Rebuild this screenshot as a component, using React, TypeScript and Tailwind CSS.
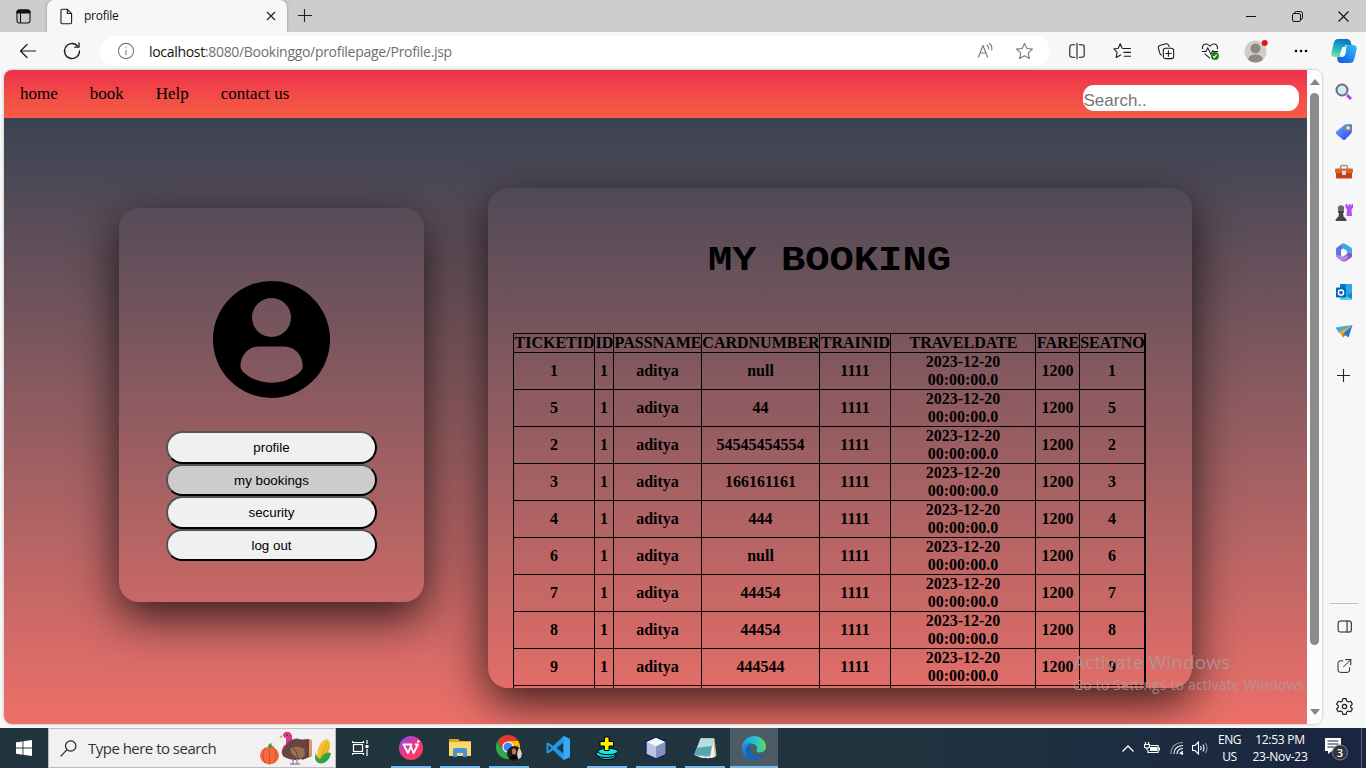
import React from "react";

type Kids = { children?: React.ReactNode };

function Line({ size = 20, w = 1.2, color = "#1b1b1b", children }: Kids & { size?: number; w?: number; color?: string }) {
  return (
    <svg width={size} height={size} viewBox="0 0 20 20" fill="none" stroke={color} strokeWidth={w} strokeLinecap="round" strokeLinejoin="round">
      {children}
    </svg>
  );
}

const star = "M10 1.500l2.500 5.300 5.900.7-4.400 4 1.200 5.900L10 14.500l-5.200 2.900 1.200-5.900-4.400-4 5.900-.7z";

function TabBar() {
  return (
    <div className="flex h-8 items-stretch bg-[#cdcdcd]">
      <div className="flex w-[47px] items-center justify-center">
        <svg width="15" height="15" viewBox="0 0 15 15" fill="none" stroke="#111" strokeWidth="1.1">
          <rect x="1" y="1" width="13" height="13" rx="2.5" />
          <path d="M1 4V3Q1 1 3 1h9q2 0 2 2v1z" fill="#111" />
          <path d="M4.5 4v10" />
        </svg>
      </div>
      <div className="flex w-60 items-center rounded-t-[7px] bg-[#f7f7f7] pl-[11px] pr-2 shadow-[0_0_3px_rgba(0,0,0,0.3)]">
        <Line size={17} w={1.3}>
          <path d="M4.5 1.5h6.500l5 5v10.500q0 1.500-1.500 1.500h-9.500q-1.500 0-1.500-1.500v-14q0-1.500 1-1.500zM11 1.500v5h5" />
        </Line>
        <span className="ml-[9px] flex-1 text-[12px] tracking-[-0.27px] text-[#111]">profile</span>
        <svg width="16" height="16" viewBox="0 0 16 16" stroke="#222" strokeWidth="1.2">
          <path d="M4 4l8 8M12 4l-8 8" />
        </svg>
      </div>
      <div className="flex w-[35px] items-center justify-center">
        <svg width="14" height="14" viewBox="0 0 14 14" stroke="#222" strokeWidth="1.1">
          <path d="M0 6.500h14M6.500 0v13" />
        </svg>
      </div>
      <div className="flex flex-1 items-center justify-end">
        <div className="flex w-[46px] justify-center">
          <svg width="10" height="10"><path d="M0 5.500h10" stroke="#111" /></svg>
        </div>
        <div className="flex w-[46px] justify-center">
          <svg width="11" height="11" viewBox="0 0 11 11" fill="none" stroke="#111">
            <rect x="0.500" y="2.500" width="8" height="8" rx="1.500" />
            <path d="M2.500 2.500Q2.500.5 4.500.5h4q2 0 2 2v4q0 2-2 2" />
          </svg>
        </div>
        <div className="flex w-[46px] justify-center">
          <svg width="11" height="11" viewBox="0 0 11 11" stroke="#111" strokeWidth="1.1"><path d="M.5.5l10 10M10.500.5l-10 10" /></svg>
        </div>
      </div>
    </div>
  );
}

function Copilot() {
  return (
    <svg width="26" height="24" viewBox="0 0 26 24">
      <defs>
        <linearGradient id="cpa" x1="0.3" y1="1" x2=".6" y2="0"><stop stopColor="#7be38b" /><stop offset=".4" stopColor="#25bcc4" /><stop offset="1" stopColor="#0b6fc0" /></linearGradient>
        <linearGradient id="cpb" x1="0" y1="1" x2="1" y2="0"><stop stopColor="#1a4fd8" /><stop offset=".5" stopColor="#1c8bf0" /><stop offset="1" stopColor="#35c4f2" /></linearGradient>
      </defs>
      <path d="M7 0h9q3 0 4 4l.6 2h-3.600q-3 0-4 3l-2 6q-1 3-4 3H3.500Q-.5 18 .5 13L3 3q1-3 4-3z" fill="url(#cpa)" />
      <path d="M19 24h-9q-3 0-3.500-3L6 18h1.500q3 0 4-3l2-6q1-3 4-3H22q4.500 0 3.500 5L23 21q-1 3-4 3z" fill="url(#cpb)" />
      <path d="M13.500 7.500q1.200-1.400 3.500-1.500h-2.500zM15.500 7q-1.500.8-2.300 3.200l-1.700 5q-.8 2.500-3 2.800h3q2.200-.5 3-3z" fill="#f7fbff" />
      <path d="M11.500 8h3.500l-3 8.500H8.500z" fill="#f7fbff" />
    </svg>
  );
}

function Toolbar() {
  return (
    <div className="flex h-[38px] items-start bg-[#f7f7f7] pt-1">
      <div className="flex h-[30px] w-14 items-center justify-center">
        <Line size={20} w={1.2}><path d="M17.500 10H2.500M9 3.500L2.500 10 9 16.500" /></Line>
      </div>
      <div className="flex h-[30px] w-8 items-center justify-center">
        <Line size={20} w={1.3}><path d="M17.500 10a7.500 7.500 0 1 1-2.200-5.300M17 2v4.200h-4.200" /></Line>
      </div>
      <div className="ml-3 flex h-[30px] w-[950px] items-center rounded-full bg-white pl-4 pr-4">
        <Line size={20} w={1.1} color="#777"><circle cx="10" cy="10" r="7.600" /><path d="M10 9.200v4.600M10 6.400v.3" /></Line>
        <span className="ml-[13px] flex-1 text-[14px] tracking-[-0.305px] text-[#6f6f6f]">
          <span className="text-[#111]">localhost</span>:8080/Bookinggo/profilepage/Profile.jsp
        </span>
        <Line size={20} w={1.1} color="#777">
          <path d="M3.500 16L8 4.500l4.500 11.500M5 12h6M12 4q1.800 1.500 1.700 4M14.500 2.500q2.800 2.300 2.300 6.500" />
        </Line>
        <span className="w-5" />
        <Line size={19} w={1.1} color="#777"><path d={star} /></Line>
      </div>
      <div className="flex h-[30px] items-center pl-[5.500px]">
        <div className="flex w-11 justify-center">
          <Line size={18}><path d="M7.500 3H4.500q-2.500 0-2.500 2.500v9Q2 17 4.500 17h3M12.500 3h3Q18 3 18 5.500v9q0 2.500-2.500 2.500h-3M10 1.500v17" /></Line>
        </div>
        <div className="flex w-[45px] justify-center">
          <Line size={18}><path d="M12 7.200L10.200 7 8 2 5.800 7l-5 .7L4.500 11.200l-1 6L8.500 14.500M12.500 7.200h7M12 11.500h7.500M12.500 15.800h7" /></Line>
        </div>
        <div className="flex w-11 justify-center">
          <Line size={18}><rect x="7" y="7" width="11.500" height="11.500" rx="2.500" /><path d="M12.700 9.700v6M9.700 12.700h6M5 14.500Q3.500 14 3 12L1.500 6.500q-.5-2 1.500-2.700L10 2q2-.5 2.700 1.500l.8 1.500" /></Line>
        </div>
        <div className="flex w-11 justify-center">
          <svg width="18" height="18" viewBox="0 0 20 20" fill="none" stroke="#1b1b1b" strokeWidth="1.200">
            <path d="M1.800 8C.8 4 3.500 1.800 6 2.200 8 2.500 9 3.500 10 4.500c1-1 2-2 4-2.300C16.500 1.800 19 4 18.200 8M1 10.500h4.500l2-4 3.500 7 2-4 1 1h5M4 13l6 5.200" />
            <circle cx="15.500" cy="15.500" r="4.300" fill="#15801b" stroke="none" />
            <path d="M13.500 15.800l1.300 1.300 2.600-3" stroke="#fff" />
          </svg>
        </div>
        <div className="flex w-12 justify-center">
          <svg width="24" height="24" viewBox="0 0 24 24">
            <circle cx="11.500" cy="12.500" r="11" fill="#d0cecb" />
            <circle cx="11.500" cy="9.500" r="5" fill="#8b8885" />
            <path d="M4 20.500q1-5 7.500-5t7.500 5q-3 3-7.500 3t-7.500-3z" fill="#8b8885" />
            <circle cx="20.700" cy="4" r="3" fill="#e81010" />
          </svg>
        </div>
        <div className="flex w-[42px] justify-center">
          <svg width="14" height="4"><circle cx="2" cy="2" r="1.300" /><circle cx="7" cy="2" r="1.300" /><circle cx="12" cy="2" r="1.300" /></svg>
        </div>
        <div className="flex w-11 justify-center"><Copilot /></div>
      </div>
    </div>
  );
}

function MenuButton({ label, active }: { label: string; active?: boolean }) {
  return (
    <button
      className={
        "h-[32.6px] w-[211px] rounded-[17px] border-2 border-black pt-[2px] text-[13.33px] text-black [border-style:outset] " +
        (active ? "bg-[#cccccc]" : "bg-[#f0f0f0]")
      }
    >
      {label}
    </button>
  );
}

const rows: [string, string][] = [
  ["1", "null"], ["5", "44"], ["2", "54545454554"], ["3", "166161161"], ["4", "444"],
  ["6", "null"], ["7", "44454"], ["8", "44454"], ["9", "444544"],
];
const heads = ["TICKETID", "ID", "PASSNAME", "CARDNUMBER", "TRAINID", "TRAVELDATE", "FARE", "SEATNO"];
const cols = "grid grid-cols-[81px_19px_88px_118px_71px_145px_44px_65px]";
const cell = "flex items-center justify-center border-l border-t border-black text-center whitespace-nowrap leading-[18px]";

function Bookings() {
  return (
    <section className="ml-16 mt-[70px] h-[500px] w-[704px] overflow-hidden rounded-[20px] pl-[25px] font-['Liberation_Serif',serif] shadow-[0_15px_46px_rgba(0,0,0,0.75)]">
      <h1 className="mt-[49px] h-12 w-[633px] scale-y-[0.85] text-center font-['Courier_New','Liberation_Mono',monospace] text-[40.5px] font-bold leading-[48px]">MY BOOKING</h1>
      <div className="mt-12 w-[633px] border-r-2 border-black text-[16px] font-bold">
        <div className={cols}>
          {heads.map((h) => <div key={h} className={cell + " h-[19px] pl-px"}>{h}</div>)}
        </div>
        {rows.map(([id, card]) => (
          <div key={id} className={cols}>
            <div className={cell + " h-[37px]"}>{id}</div>
            <div className={cell}>1</div>
            <div className={cell}>aditya</div>
            <div className={cell}>{card}</div>
            <div className={cell}>1111</div>
            <div className={cell}>2023-12-20<br />00:00:00.0</div>
            <div className={cell}>1200</div>
            <div className={cell}>{id}</div>
          </div>
        ))}
        <div className={cols}>
          {heads.map((h) => <div key={h} className={cell + " h-[37px]"} />)}
        </div>
      </div>
    </section>
  );
}

function ProfileCard() {
  return (
    <section className="ml-[115px] mt-[90px] flex h-[394px] w-[305px] flex-col items-center rounded-[20px] pt-[73px] font-['Liberation_Sans',sans-serif] shadow-[0_15px_46px_rgba(0,0,0,0.75)]">
      <svg width="117" height="117" viewBox="0 0 117 117">
        <path
          fillRule="evenodd"
          d="M58.500 0a58.500 58.500 0 1 0 0 117a58.500 58.500 0 1 0 0-117zM58.500 17a19.500 19.500 0 1 1 0 39a19.500 19.500 0 1 1 0-39zM46 65.500h25c11.500 0 19 9.500 18.700 20q-.1 3-2.200 5C79.500 98 69 101.800 58.500 101.800S37.500 98 29.700 90.500q-2.100-2-2.200-5C27.200 75 34.500 65.500 46 65.500z"
        />
      </svg>
      <div className="mt-[33px] flex flex-col">
        <MenuButton label="profile" />
        <MenuButton label="my bookings" active />
        <MenuButton label="security" />
        <MenuButton label="log out" />
      </div>
    </section>
  );
}

function WebPage() {
  return (
    <div className="flex h-[654px] w-[1303px] flex-col">
      <nav className="flex h-12 shrink-0 items-start bg-linear-to-b from-[#ed314b] to-[#f65d43] pl-4 pr-2 font-['Liberation_Serif',serif] text-[17px] text-black">
        <div className="flex flex-1 gap-8 pt-[14px] leading-5">
          <span>home</span><span>book</span><span>Help</span><span>contact us</span>
        </div>
        <div className="mt-[15px] h-[26px] w-[216px] rounded-[11px] bg-white pl-[0.500px] pt-[6px] font-['Liberation_Sans',sans-serif] text-[17px] leading-5 text-[#757575]">Search..</div>
      </nav>
      <main className="flex flex-1 items-start overflow-hidden bg-linear-to-b from-[#3a4353] to-[#ee6f69]">
        <ProfileCard />
        <Bookings />
      </main>
    </div>
  );
}

function Scrollbar() {
  return (
    <div className="flex w-[15px] flex-col items-center bg-[#fcfcfc] pt-[9px]">
      <svg width="10" height="6"><path d="M0 6L5 0l5 6z" fill="#858585" /></svg>
      <div className="mt-2 h-[552px] w-[9px] rounded-full bg-[#8b8b8b]" />
      <svg className="mt-[64px]" width="10" height="6"><path d="M0 0h10L5 6z" fill="#858585" /></svg>
    </div>
  );
}

const side: React.ReactNode[] = [
  <svg width="18" height="18" viewBox="0 0 18 18"><circle cx="7" cy="7" r="5.500" fill="#cdeafb" stroke="#6b6e73" strokeWidth="2" /><path d="M12 12l4 4" stroke="#b23cf0" strokeWidth="3" /></svg>,
  <svg width="18" height="18" viewBox="0 0 18 18"><defs><linearGradient id="tg" x1="0" y1="0" x2="1" y2="1"><stop stopColor="#62b2f8" /><stop offset="1" stopColor="#3a3cf0" /></linearGradient></defs><path d="M10 1.500L15.500 1q1.500 0 1.500 1.500l-.3 6.500q0 1-1 2l-5.500 5.500q-1.200 1.200-2.500 0L1.200 11q-1-1.500.3-2.700z" fill="url(#tg)" /><circle cx="13.200" cy="5" r="2" fill="#ffe45c" stroke="#e2a81c" strokeWidth=".6" /></svg>,
  <svg width="18" height="16" viewBox="0 0 18 16"><path d="M5.500 5V3q0-1.500 1.500-1.500h4q1.500 0 1.500 1.500v2" fill="none" stroke="#8f8f8f" strokeWidth="1.400" /><rect y="4.500" width="18" height="4.500" rx="1" fill="#e0622b" /><path d="M1 9h16v4.500q0 1-1 1H2q-1 0-1-1z" fill="#bf4310" /><rect x="7" y="6.500" width="4" height="4.500" rx="1" fill="#d9dde0" /></svg>,
  <svg width="18" height="19" viewBox="0 0 18 19"><path d="M10.500 1h1.700v1.500h1.500V1h1.600v1.500h1.200V1H18v4l-1.500 1 .5 7h-5.500l.5-7-1.500-1z" fill="#b44df2" /><circle cx="6" cy="5.500" r="3.200" fill="#6a6a6a" /><path d="M3 8h6v1.500L8 10l.6 3.500 2 2q1 .6 1 2.500H.5q0-1.900 1-2.500l2-2L4 10 3 9.500z" fill="#444" /></svg>,
  <svg width="18" height="19" viewBox="0 0 18 19">
    <path d="M8.500.5q-1 0-2 .8L2 4.500Q1 5.200 1 6.500v6q0 1 1 1.500l4 1.500V7.500q0-1 1-1.600L12 3z" fill="#5a72e2" />
    <path d="M7 .8q2-.8 3.500.2L16 4.500q1 .7 1 2v6.500l-5-3V8L8 5.300Q6 3.500 7 .8z" fill="#3daae8" />
    <path d="M17 11v2q0 1-1 1.700L11 18q-2 1-4 0l-5-3.500 6.500-1 5-4z" fill="#8a55c4" />
    <path d="M1 11l5 2.500q2.500 1 4-.3l2-1.200q2 2.500-1.500 5-2 1.200-4 .3L2 14.300Q1 13.500 1 11z" fill="#b08be4" />
    <path d="M9 6.500l2.700 1.500v3L9 12.600 6.300 11V8z" fill="#f7f7f7" />
  </svg>,
  <svg width="18" height="18" viewBox="0 0 18 18"><rect x="5" y="1" width="12" height="14" rx="1" fill="#28a8ea" /><path d="M5 1h6v6H5z" fill="#0f78c9" /><path d="M5 9l6 4 6-4v7q0 1-1 1H6q-1 0-1-1z" fill="#50d0f5" /><path d="M11 13l6-4v7z" fill="#1588cc" /><rect x="1" y="4.500" width="10" height="10" rx="1" fill="#0864b8" /><circle cx="6" cy="9.500" r="2.600" fill="none" stroke="#fff" strokeWidth="1.500" /></svg>,
  <svg width="18" height="16" viewBox="0 0 18 16"><path d="M.5 3.500L17.500 1 7 8.500 4 9z" fill="#35aaf0" /><path d="M17.500 1L13.500 13.500 8 9.500z" fill="#2277dd" /><path d="M4 7.500L17.500 1 8 9v4.500z" fill="#f0a41c" /><path d="M8 13.500V9.300l2.500 2z" fill="#ca6c10" /></svg>,
];

function Sidebar() {
  return (
    <aside className="flex w-11 flex-col items-center pt-[2px]">
      {side.map((s, i) => <div key={i} className="flex h-10 items-center">{s}</div>)}
      <div className="flex h-[47px] items-center pr-px"><svg width="13" height="13" stroke="#222" strokeWidth="1.100"><path d="M0 6.500h13M6.500 0v13" /></svg></div>
      <div className="mt-[204px] mb-[2px] h-px w-7 bg-[#c0c0c0]" />
      <div className="flex h-10 items-center"><Line size={17}><rect x="2.500" y="3.500" width="15.500" height="13" rx="2.500" /><path d="M13 3.500v13" /></Line></div>
      <div className="flex h-10 items-center"><Line size={16}><path d="M8.500 3.500H5.500q-3 0-3 3V15q0 3 3 3h8.500q3 0 3-3v-3M12 2H18.500v6.500M18.500 2L9.500 11" /></Line></div>
      <div className="flex h-10 items-center">
        <Line size={19} w={1.2}>
          <path d="M8.300 1.700h3.400l.6 2.500 1.700 1 2.500-.7 1.800 3-1.800 1.700v1.600l1.800 1.700-1.800 3-2.500-.7-1.700 1-.6 2.500H8.300l-.6-2.500-1.700-1-2.500.7-1.800-3 1.800-1.700V9.200L1.700 7.500l1.800-3 2.500.7 1.700-1z" />
          <circle cx="10" cy="10" r="2.300" />
        </Line>
      </div>
    </aside>
  );
}

const apps: { icon: React.ReactNode; bar: string }[] = [
  { bar: "w-10", icon: <svg width="24" height="24" viewBox="0 0 24 24"><defs><linearGradient id="wp" x1="0" y1="0" x2=".8" y2="1"><stop stopColor="#7a55ff" /><stop offset=".55" stopColor="#f2347f" /><stop offset="1" stopColor="#ff3b5c" /></linearGradient></defs><circle cx="12" cy="12" r="12" fill="url(#wp)" /><path d="M4.500 8.500h8L9 17zM12 11l2.500 6L19 8.500h-3" fill="none" stroke="#fff" strokeWidth="1.900" strokeLinejoin="round" /><circle cx="19.300" cy="5.500" r="1.200" fill="#fff" /></svg> },
  { bar: "w-10", icon: <svg width="22" height="20" viewBox="0 0 22 20"><path d="M0 1h9l2 2h11v15H0z" fill="#e4a11b" /><path d="M0 4h22v14H0z" fill="#fdd76e" /><path d="M4 19v-7q0-2 2-2h10q2 0 2 2v7h-4v-4H8v4z" fill="#3f96d8" /></svg> },
  { bar: "w-10", icon: <svg width="26" height="26" viewBox="0 0 26 26"><path d="M12 12L1.600 6A12 12 0 0 1 22.400 6z" fill="#e33b2e" /><path d="M1.600 6A12 12 0 0 0 12 24l5-9-10 0z" fill="#2da94f" /><path d="M22.400 6A12 12 0 0 1 12 24l5.200-9L12 6z" fill="#fdbd00" /><path d="M2 6h20.400H12L7 15z" fill="#e33b2e" /><circle cx="12" cy="12" r="5.600" fill="#fff" /><circle cx="12" cy="12" r="4.500" fill="#4285f4" /><circle cx="18.500" cy="18.500" r="7.500" fill="#20191a" /><path d="M23 12.800q4.500 4 2 9.500l-2.500 2.200q-3-5.500.5-11.700z" fill="#d7d1c8" /><ellipse cx="18" cy="16.500" rx="2.200" ry="3" fill="#bb7a55" /><path d="M14 24q1-4 4-4t4 4z" fill="#050505" /></svg> },
  { bar: "w-0", icon: <svg width="24" height="24" viewBox="0 0 24 24"><path d="M17.500 0L24 3v18l-6.500 3L7 14 2.500 17.500.5 16.500V7.500l2-1L7 10z" fill="#2196e3" /><path d="M17.500 6.500v11L10.500 12zM2.500 9v6l3-3z" fill="#21353f" /><path d="M17.500 0L24 3v18l-6.500 3z" fill="#37a9f2" /></svg> },
  { bar: "w-10", icon: <svg width="24" height="24" viewBox="0 0 24 24"><g stroke="#000"><ellipse cx="12" cy="20" rx="9" ry="3.500" fill="#10d8dc" /><ellipse cx="11" cy="18" rx="10" ry="3.500" fill="#10d8dc" /><ellipse cx="13" cy="15.500" rx="10" ry="3.200" fill="#14e4e8" /><path d="M9.500 1h4.500v4.500h4.500V10H14v4.500H9.500V10H5V5.500h4.500z" fill="#fff000" /></g></svg> },
  { bar: "w-10", icon: <svg width="22" height="24" viewBox="0 0 22 24"><path d="M11 1l10 4.500v13L11 23 1 18.500v-13z" fill="#b5c8df" stroke="#20205c" strokeWidth="1.400" /><path d="M11 2l9 4-9 4.500L2 6z" fill="#f2f7fa" /><path d="M11 10.500L20 6v12l-9 4z" fill="#8294bb" /></svg> },
  { bar: "w-10", icon: <svg width="24" height="24" viewBox="0 0 24 24"><path d="M8 2l13.500.5L23.500 20l-5 2z" fill="#d1b98a" /><path d="M20 3l2 18-8 1.500z" fill="#f2f2ee" /><path d="M7.500 2.500H21L17 21 1 19z" fill="#9dd0d3" /><path d="M7.500 2.500H21l-1.800 8L4.500 11z" fill="#b9dcde" /><path d="M4 12l14.800-2L17 20 1 19z" fill="#4e9ca5" opacity=".85" /><path d="M1 19l16 2 1-1.500 2 2.500H9z" fill="#e8ebe8" /></svg> },
  { bar: "w-12", icon: <svg width="24" height="24" viewBox="0 0 24 24"><defs><linearGradient id="ed" x1="0" y1="0" x2="1" y2="0"><stop stopColor="#1ba3dd" /><stop offset=".55" stopColor="#26bfd1" /><stop offset="1" stopColor="#61d958" /></linearGradient><linearGradient id="ee" x1="0" y1="0" x2="1" y2="1"><stop stopColor="#2894df" /><stop offset="1" stopColor="#0b4f9e" /></linearGradient></defs><path d="M0 12C0 5 5.500 0 12 0s12 5 12 10.500c0 4-3 6-6 6-2.500 0-4-1-3.500-2 1.500-2 .5-5.500-3.500-6.500C6 7 1 9 0 12z" fill="url(#ed)" /><path d="M0 12c1-4 5.500-6 10-4.500-3 1.500-3 4.500-2 7 2 5 8 7 13.500 4C19 22 16 24 12 24 5 24 0 19 0 12z" fill="url(#ee)" /><path d="M10 7.500c-5 1-7 5-6 9 1 4 4.500 7 9 7.500 3.500-.3 6.500-2 8.500-5-5.500 2.500-11 .5-13-4.500-1-2.500-1-5.500 1.500-7z" fill="#1267b5" /></svg> },
];

function Taskbar() {
  return (
    <footer className="flex h-10 items-stretch bg-linear-to-r from-[#21353e] via-[#20343f] via-65% to-[#1a2541] text-white">
      <div className="flex w-12 items-center justify-center">
        <svg width="16" height="16" viewBox="0 0 16 16" fill="#fff"><path d="M0 2.300L6.500 1.400v6.200H0zM7.400 1.200L16 0v7.600H7.400zM0 8.500h6.500v6.200L0 13.800zM7.400 8.500H16V16l-8.600-1.200z" /></svg>
      </div>
      <div className="flex w-72 items-center border border-[#bcbcbc] bg-[#f1f1f1] pl-[11px] pr-[3px]">
        <svg width="17" height="17" viewBox="0 0 17 17" fill="none" stroke="#222" strokeWidth="1.200"><circle cx="10.700" cy="6" r="5.200" /><path d="M7 9.700L.7 16.300" /></svg>
        <span className="ml-[11px] flex-1 text-[15px] tracking-[-0.52px] text-[#333]">Type here to search</span>
        <svg width="73" height="36" viewBox="0 0 73 36">
          <ellipse cx="10.500" cy="25.500" rx="9.500" ry="9" fill="#f36b3e" />
          <path d="M10.500 17v17M6 18q-4 7 0 15M15 18q4 7 0 15" stroke="#d84a28" fill="none" />
          <path d="M9 17q0-3 3-4l1 3 3 1-3 1z" fill="#4c9140" />
          <path d="M39 10l10-1 4 2v15l-10 4z" fill="#6b3e35" /><path d="M50 9l3 1v16l-3 1z" fill="#d49a68" />
          <path d="M23 24q-1-7 4-10V8q-2 0-3-2 0-5 6-4 4 2 3 8l3 7z" fill="#dc3c8c" />
          <path d="M29 12q9-7 17 0 6 9 1 14-7 6-17 3-9-3-7-8z" fill="#6a4540" />
          <path d="M31 19q7-5 14 0 3 7-3 9-9 0-11-9z" fill="#9b7052" /><path d="M34 18q4 3 5 9" stroke="#66403b" fill="none" />
          <path d="M23 5l-3 2 3 1z" fill="#f0a030" /><circle cx="28" cy="5" r=".8" fill="#222" />
          <path d="M34 29v5m4-5v5m-7 0h10" stroke="#9c84b0" strokeWidth="1.300" />
          <path d="M58 28q0-16 10-19 5 2 2 12-3 9-8 11z" fill="#f4c030" /><path d="M62 27l6-15M65 28l5-12" stroke="#d69c20" />
          <path d="M57 20q-1 6 4 9 5-8 11-6-1 7-7 10-8 2-9-5z" fill="#35a046" />
        </svg>
      </div>
      <div className="flex w-[49px] items-center justify-center">
        <svg width="17" height="16" viewBox="0 0 17 16" fill="none" stroke="#fff" strokeWidth="1.200"><rect x="1.500" y="4.500" width="9" height="7" /><path d="M.5 1v1.500h11V1M.5 15v-1.500h11V15M15 0v4M15 9v7" /><path d="M13.500 5h3v3h-3z" fill="#fff" stroke="none" /></svg>
      </div>
      <div className="flex pl-px">
        {apps.map((a, i) => (
          <div key={i} className={"flex h-10 flex-col items-center " + (i === 7 ? "ml-px w-12 bg-[#4d5c64]" : "w-[49px]")}>
            <div className="flex h-[38px] items-center pt-[2px]">{a.icon}</div>
            <div className={"h-[2px] bg-[#76b9ed] " + a.bar} />
          </div>
        ))}
      </div>
      <div className="flex flex-1 items-center justify-end">
        <div className="flex w-6 justify-center"><svg width="12" height="7" fill="none" stroke="#fff" strokeWidth="1.300"><path d="M.5 6.500L6 1l5.500 5.500" /></svg></div>
        <div className="flex w-6 justify-center">
          <svg width="16" height="13" viewBox="0 0 16 13" fill="none" stroke="#fff" strokeWidth="1.200"><path d="M6.500 3.500h7.500v7H4V8" /><path d="M6 5h7v4H6zM14.500 5.500H16v3h-1.500z" fill="#fff" stroke="none" /><path d="M1.500 0v2M4.500 0v2M.5 2.500h5v2q0 1.500-2.500 1.500T.5 4.500zM3 6v2" /></svg>
        </div>
        <div className="flex w-[26px] justify-center">
          <svg width="14" height="14" viewBox="0 0 14 14" fill="none" stroke="#fff" strokeWidth="1.100"><path d="M1 13Q1 2 13 1.500" opacity=".55" /><path d="M4 13Q4 5 13 4.500M7 13q0-5 6-5.500M10 13q0-2 3-2.500" /><circle cx="12" cy="12.500" r="1.200" fill="#fff" stroke="none" /></svg>
        </div>
        <div className="flex w-5 justify-center">
          <svg width="17" height="14" viewBox="0 0 17 14" fill="none" stroke="#fff" strokeWidth="1.100"><path d="M.5 4.500h2.500l3.500-3.500v12L3 9.500H.5zM8.500 5q1.300 2 0 4M10.800 3.500q2.300 3.500 0 7" /><path d="M13.300 2q3.500 5 0 10" opacity=".5" /></svg>
        </div>
        <div className="w-[39px] text-center text-[12px] leading-[17px] tracking-[-0.4px]">ENG<br />US</div>
        <div className="w-[62px] text-center text-[12px] leading-[17px] tracking-[-0.25px] whitespace-nowrap">12:53 PM<br />23-Nov-23</div>
        <div className="flex w-[50px] justify-center">
          <svg width="25" height="26" viewBox="0 0 25 26">
            <path d="M1 3h16v13H8l-4 3v-3H1z" fill="#fff" /><path d="M3.500 6h11M3.500 9h11M3.500 12h7" stroke="#1a2741" strokeWidth="1.200" />
            <circle cx="16" cy="17.500" r="7.500" fill="#30343d" stroke="#7d828b" />
            <text x="16" y="21.500" fontSize="11" fill="#fff" textAnchor="middle" fontWeight="600">3</text>
          </svg>
        </div>
        <div className="h-10 w-[5px] border-l border-[#5b6577]" />
      </div>
    </footer>
  );
}

export default function App() {
  return (
    <div className="relative flex h-[768px] w-[1366px] flex-col overflow-hidden bg-[#f7f7f7] font-['Segoe_UI','Open_Sans','Noto_Sans',sans-serif]">
      <TabBar />
      <Toolbar />
      <div className="flex h-[658px] pl-1">
        <div className="flex h-[654px] w-[1318px] overflow-hidden rounded-lg shadow-[0_0_3px_rgba(0,0,0,0.3)]">
          <WebPage />
          <Scrollbar />
        </div>
        <Sidebar />
      </div>
      <Taskbar />
      <div className="absolute left-[1073px] top-[650px] whitespace-nowrap text-[#a99d9d]/80">
        <div className="text-[19px] leading-6 tracking-[0.07px]">Activate Windows</div>
        <div className="text-[14px] leading-[22px] tracking-[0.17px]">Go to Settings to activate Windows.</div>
      </div>
    </div>
  );
}
